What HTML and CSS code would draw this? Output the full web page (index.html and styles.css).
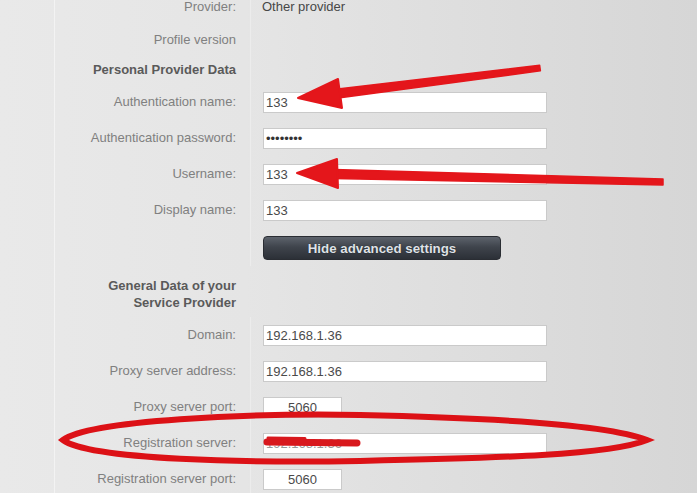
FILE: index.html
```html
<!DOCTYPE html>
<html>
<head>
<meta charset="utf-8">
<link rel="stylesheet" href="styles.css">
</head>
<body>
<div class="page">
  <div class="side"></div>
  <div class="form">
    <div class="row h34">
      <div class="lbl">Provider:</div>
      <div class="val"><span class="plain">Other provider</span></div>
    </div>
    <div class="row h32">
      <div class="lbl">Profile version</div>
      <div class="val"></div>
    </div>
    <div class="row h28">
      <div class="lbl head">Personal Provider Data</div>
      <div class="val"></div>
    </div>
    <div class="row">
      <div class="lbl">Authentication name:</div>
      <div class="val"><input class="field" type="text" value="133"></div>
    </div>
    <div class="row">
      <div class="lbl">Authentication password:</div>
      <div class="val"><input class="field pw" type="password" value="12345678"></div>
    </div>
    <div class="row">
      <div class="lbl">Username:</div>
      <div class="val"><input class="field" type="text" value="133"></div>
    </div>
    <div class="row">
      <div class="lbl">Display name:</div>
      <div class="val"><input class="field" type="text" value="133"></div>
    </div>
    <div class="row h38">
      <div class="lbl"></div>
      <div class="val"><button class="btn" type="button">Hide advanced settings</button></div>
    </div>
    <div class="row h51 section">
      <div class="lbl head two">General Data of your<br>Service Provider</div>
      <div class="val none"></div>
    </div>
    <div class="row">
      <div class="lbl">Domain:</div>
      <div class="val"><input class="field" type="text" value="192.168.1.36"></div>
    </div>
    <div class="row">
      <div class="lbl">Proxy server address:</div>
      <div class="val"><input class="field" type="text" value="192.168.1.36"></div>
    </div>
    <div class="row">
      <div class="lbl">Proxy server port:</div>
      <div class="val"><input class="field short" type="text" value="5060"></div>
    </div>
    <div class="row">
      <div class="lbl">Registration server:</div>
      <div class="val"><input class="field faded" type="text" value="192.168.1.36"></div>
    </div>
    <div class="row">
      <div class="lbl">Registration server port:</div>
      <div class="val"><input class="field short" type="text" value="5060"></div>
    </div>
  </div>
</div>
<svg class="marks" width="697" height="493" viewBox="0 0 697 493" xmlns="http://www.w3.org/2000/svg">
  <g fill="#e4161b" stroke="#e4161b" stroke-linejoin="round" stroke-linecap="round" stroke-width="1.5">
    <path d="M334.5 98.5 L540.4 70.8 L539.6 65.2 L333.5 89.5 Z"/>
    <path d="M298 98 L338 79 L342 108 Z" stroke-width="2"/>
    <path d="M334 178.5 L663 185 L663 179 L334 169.5 Z"/>
    <path d="M297 173 L337 159 L338 188 Z" stroke-width="2"/>
  </g>
  <path d="M63 440 C 90 420, 250 413, 360 415 C 500 418, 610 425, 647 440 C 610 455, 500 458, 360 461 C 250 463, 90 460, 63 440 Z" fill="none" stroke="#dc1116" stroke-width="6"/>
  <path d="M267 442 L357 443" stroke="#d8181d" stroke-width="7" stroke-linecap="round" fill="none"/>
  <path d="M268 438 L305 438.5" stroke="#d8181d" stroke-width="3" stroke-linecap="round" fill="none"/>
</svg>
</body>
</html>
```

FILE: styles.css
```css
html, body {
  margin: 0;
  padding: 0;
}
body {
  width: 697px;
  height: 493px;
  overflow: hidden;
  position: relative;
  background: linear-gradient(to right, #e9e9e9 0%, #e5e5e5 35%, #dddddd 70%, #d6d6d6 100%);
  font-family: "Liberation Sans", Arial, sans-serif;
  font-size: 13px;
}
.page {
  display: flex;
  height: 493px;
}
.side {
  width: 54px;
  flex: none;
  border-right: 1px solid #f3f3f3;
}
.form {
  display: flex;
  flex-direction: column;
  margin-top: -10px;
  flex: 1;
}
.row {
  display: flex;
  height: 36px;
  flex: none;
}
.h34 { height: 34px; }
.h32 { height: 32px; }
.h28 { height: 28px; }
.h38 { height: 38px; }
.h51 { height: 51px; }
.lbl {
  width: 195px;
  flex: none;
  box-sizing: border-box;
  padding-right: 14px;
  text-align: right;
  color: #808080;
  display: flex;
  align-items: center;
  justify-content: flex-end;
  line-height: 16px;
}
.lbl.head {
  font-weight: bold;
  color: #5a5a5a;
}
.lbl.two {
  padding-top: 4px;
  line-height: 17px;
}
.val {
  flex: 1;
  border-left: 1px solid #ececec;
  padding-left: 12px;
  display: flex;
  align-items: center;
}
.val.none {
  border-left-color: transparent;
}
.plain {
  color: #474747;
  margin-left: -1px;
  margin-top: -2px;
}
.field {
  width: 284px;
  height: 21px;
  box-sizing: border-box;
  margin: 0;
  border: 1px solid #cacaca;
  background: #ffffff;
  padding: 1px 2px 0;
  font-family: "Liberation Sans", Arial, sans-serif;
  font-size: 13px;
  color: #4a4a4a;
  outline: none;
}
.field.pw {
  color: #333;
}
.field.short {
  width: 79px;
  text-align: center;
}
.field.faded {
  color: #9a9a9a;
}
.btn {
  width: 238px;
  height: 24px;
  margin: 2px 0 0;
  box-sizing: border-box;
  border: 1px solid #2a2d33;
  border-radius: 4px;
  background: linear-gradient(to bottom, #5d636c 0%, #3f444c 45%, #2c3037 100%);
  color: #dfe2e7;
  font-family: "Liberation Sans", Arial, sans-serif;
  font-size: 13.3px;
  font-weight: bold;
  padding: 0;
  text-shadow: 0 0 1px rgba(0,0,0,0.6);
}
.marks {
  position: absolute;
  left: 0;
  top: 0;
  pointer-events: none;
}
```
